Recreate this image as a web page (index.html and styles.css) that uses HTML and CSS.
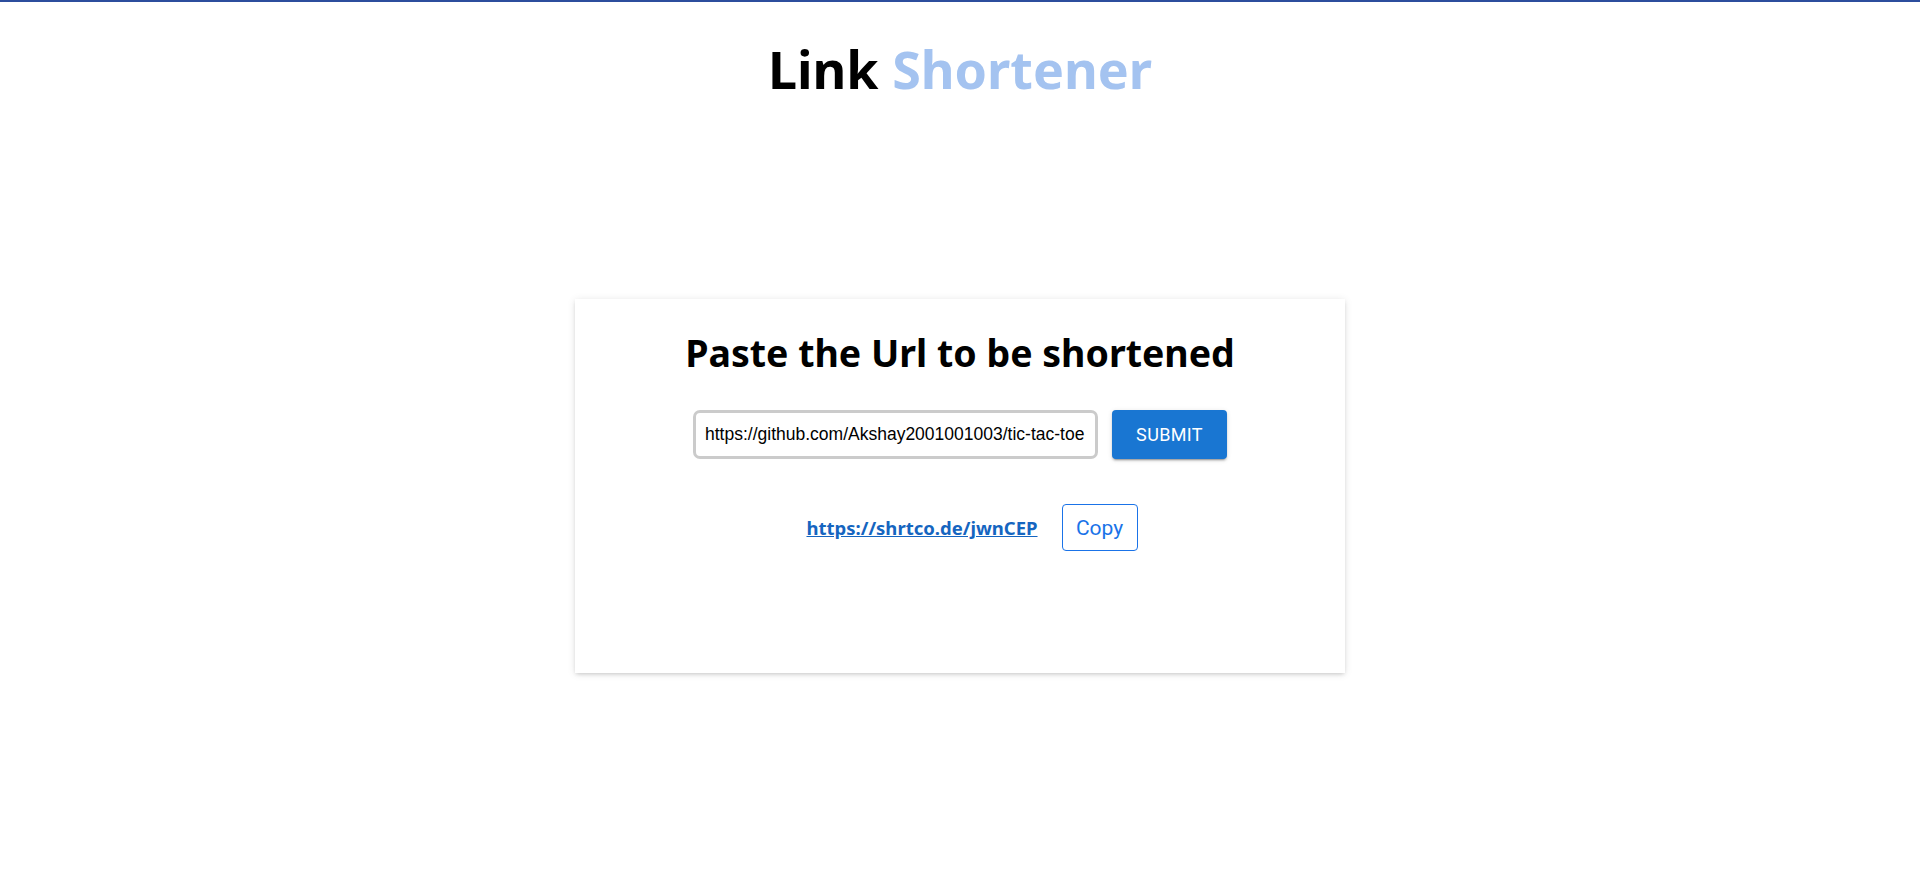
FILE: index.html
```html
<!DOCTYPE html>
<html lang="en">
<head>
<meta charset="utf-8">
<title>Link Shortener</title>
<link rel="stylesheet" href="styles.css">
</head>
<body>
<div class="page">
  <header class="header">
    <h1 class="title"><span class="title-dark">Link</span> <span class="title-light">Shortener</span></h1>
  </header>
  <main class="main">
    <section class="card">
      <h2 class="card-title">Paste the Url to be shortened</h2>
      <form class="form">
        <input class="url-input" type="text" value="https://github.com/Akshay2001001003/tic-tac-toe">
        <button class="submit-btn" type="button">SUBMIT</button>
      </form>
      <div class="result">
        <a class="short-link" href="#">https://shrtco.de/jwnCEP</a>
        <button class="copy-btn" type="button">Copy</button>
      </div>
    </section>
  </main>
</div>
</body>
</html>
```

FILE: styles.css
```css
* { box-sizing: border-box; }
html, body { margin: 0; padding: 0; background: #fff; }
body {
  border-top: 2px solid #2c4d9d;
  font-family: "Noto Sans", "Open Sans", sans-serif;
  color: #000;
  min-height: 870px;
}
.page {
  display: flex;
  flex-direction: column;
  align-items: center;
}
.header {
  padding-top: 27px;
}
.title {
  margin: 0;
  font-size: 52px;
  font-weight: 700;
  line-height: 80px;
  letter-spacing: 0;
}
.title-dark { color: #000; }
.title-light { color: #a4c3f0; }
.main {
  padding-top: 190px;
  padding-bottom: 40px;
}
.card {
  width: 770px;
  height: 374px;
  background: #fff;
  box-shadow: 0 2px 4px -1px rgba(0,0,0,0.16), 0 1px 8px 0 rgba(0,0,0,0.10);
  display: flex;
  flex-direction: column;
  align-items: center;
  padding-top: 26px;
}
.card-title {
  margin: 0;
  font-size: 37.5px;
  font-weight: 700;
  line-height: 56px;
}
.form {
  display: flex;
  align-items: center;
  gap: 14px;
  margin-top: 29px;
}
.url-input {
  width: 405px;
  height: 49px;
  border: 3px solid #cbcbcb;
  border-radius: 7px;
  padding: 0 3px 0 9px;
  font-family: "Liberation Sans", Arial, sans-serif;
  font-size: 17.5px;
  color: #000;
  outline: none;
}
.submit-btn {
  width: 115px;
  height: 49px;
  border: none;
  border-radius: 4px;
  background: #1976d2;
  color: #fff;
  font-family: Roboto, "Liberation Sans", sans-serif;
  font-size: 18px;
  font-weight: 400;
  letter-spacing: 0.02em;
  box-shadow: 0 3px 1px -2px rgba(0,0,0,0.2), 0 2px 2px 0 rgba(0,0,0,0.14), 0 1px 5px 0 rgba(0,0,0,0.12);
  cursor: pointer;
}
.result {
  display: flex;
  align-items: center;
  gap: 24px;
  margin-top: 45px;
  margin-left: 24px;
}
.short-link {
  color: #1565c0;
  font-weight: 700;
  font-size: 18.5px;
  text-decoration: underline;
}
.copy-btn {
  width: 76px;
  height: 47px;
  border: 1px solid #1a73e8;
  border-radius: 4px;
  background: #fff;
  color: #1a73e8;
  font-family: Roboto, "Liberation Sans", sans-serif;
  font-size: 21px;
  cursor: pointer;
}
```
